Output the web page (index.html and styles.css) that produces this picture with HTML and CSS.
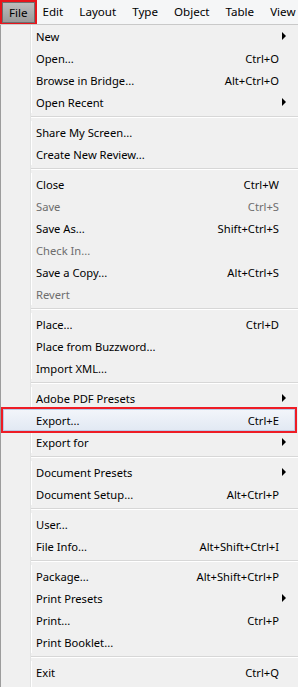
FILE: index.html
```html
<!DOCTYPE html>
<html lang="en">

<head>
    <meta charset="UTF-8">
    <link rel="stylesheet" href="styles.css">
    <meta name="viewport" content="width=device-width, initial-scale=1.0">
    <title>File menu</title>
</head>

<body>
    <div class="menubar">
        <span class="top active">File</span>
        <span class="top">Edit</span>
        <span class="top">Layout</span>
        <span class="top">Type</span>
        <span class="top">Object</span>
        <span class="top">Table</span>
        <span class="top">View</span>
    </div>
    <div class="menu">
        <div class="item sub">New<span class="arrow"></span></div>
        <div class="item">Open...<span class="key">Ctrl+O</span></div>
        <div class="item">Browse in Bridge...<span class="key">Alt+Ctrl+O</span></div>
        <div class="item sub">Open Recent<span class="arrow"></span></div>
        <div class="sep"></div>
        <div class="item">Share My Screen...</div>
        <div class="item">Create New Review...</div>
        <div class="sep"></div>
        <div class="item">Close<span class="key">Ctrl+W</span></div>
        <div class="item off">Save<span class="key">Ctrl+S</span></div>
        <div class="item">Save As...<span class="key">Shift+Ctrl+S</span></div>
        <div class="item off">Check In...</div>
        <div class="item">Save a Copy...<span class="key">Alt+Ctrl+S</span></div>
        <div class="item off">Revert</div>
        <div class="sep"></div>
        <div class="item">Place...<span class="key">Ctrl+D</span></div>
        <div class="item">Place from Buzzword...</div>
        <div class="item">Import XML...</div>
        <div class="sep"></div>
        <div class="item sub">Adobe PDF Presets<span class="arrow"></span></div>
        <div class="item hot">Export...<span class="key">Ctrl+E</span></div>
        <div class="item sub">Export for<span class="arrow"></span></div>
        <div class="sep"></div>
        <div class="item sub">Document Presets<span class="arrow"></span></div>
        <div class="item">Document Setup...<span class="key">Alt+Ctrl+P</span></div>
        <div class="sep"></div>
        <div class="item">User...</div>
        <div class="item">File Info...<span class="key">Alt+Shift+Ctrl+I</span></div>
        <div class="sep"></div>
        <div class="item">Package...<span class="key">Alt+Shift+Ctrl+P</span></div>
        <div class="item sub">Print Presets<span class="arrow"></span></div>
        <div class="item">Print...<span class="key">Ctrl+P</span></div>
        <div class="item">Print Booklet...</div>
        <div class="sep"></div>
        <div class="item">Exit<span class="key">Ctrl+Q</span></div>
    </div>
</body>

</html>
```

FILE: styles.css
```css
body {
    margin: 0;
    width: 298px;
    height: 687px;
    overflow: hidden;
    background: #f0f0f0;
    font-family: "Noto Sans", "DejaVu Sans", sans-serif;
    font-size: 11.2px;
    color: #000;
}

.menubar {
    display: flex;
    height: 25px;
    align-items: center;
    background: #f5f6f7;
    border-bottom: solid 1px #c9c9c9;
    box-sizing: border-box;
    padding-left: 2px;
    font-size: 11.6px;
    white-space: nowrap;
    overflow: hidden;
}

.top {
    padding: 0 8px;
    height: 20px;
    line-height: 20px;
}

.active {
    background: linear-gradient(#bdbdbd, #9a9a9a);
    border: solid 1px #6e6e6e;
    outline: solid 2px #e8141b;
    padding: 0 6px;
    height: 19px;
    line-height: 19px;
}

.menu {
    height: 662px;
    border-left: solid 1px #9c9c9c;
    border-bottom: solid 1px #9c9c9c;
    background: linear-gradient(to right, #f0f0f0 29px, #e2e3e3 29px, #e2e3e3 30px, #fff 30px, #fff 31px, #f0f0f0 31px);
}

.item {
    display: flex;
    align-items: center;
    height: 22px;
    margin: 0 3px 0 2px;
    padding-left: 33px;
    padding-right: 16px;
    box-sizing: border-box;
    position: relative;
    white-space: nowrap;
}

.key {
    margin-left: auto;
}

.off {
    color: #6d6d6d;
}

.arrow {
    position: absolute;
    right: 9px;
    top: 7px;
    border-left: solid 4px #000;
    border-top: solid 4px transparent;
    border-bottom: solid 4px transparent;
}

.hot {
    background: linear-gradient(#f2f5fa, #e2e9f3);
    border: solid 1px #b8cbe6;
    padding-left: 32px;
    padding-right: 15px;
    outline: solid 2px #ee1c25;
    outline-offset: 0;
}

.sep {
    height: 8px;
    margin-left: 30px;
    background: linear-gradient(#f0f0f0 3px, #d7d7d7 3px, #d7d7d7 4px, #fff 4px, #fff 5px, #f0f0f0 5px);
}
```
